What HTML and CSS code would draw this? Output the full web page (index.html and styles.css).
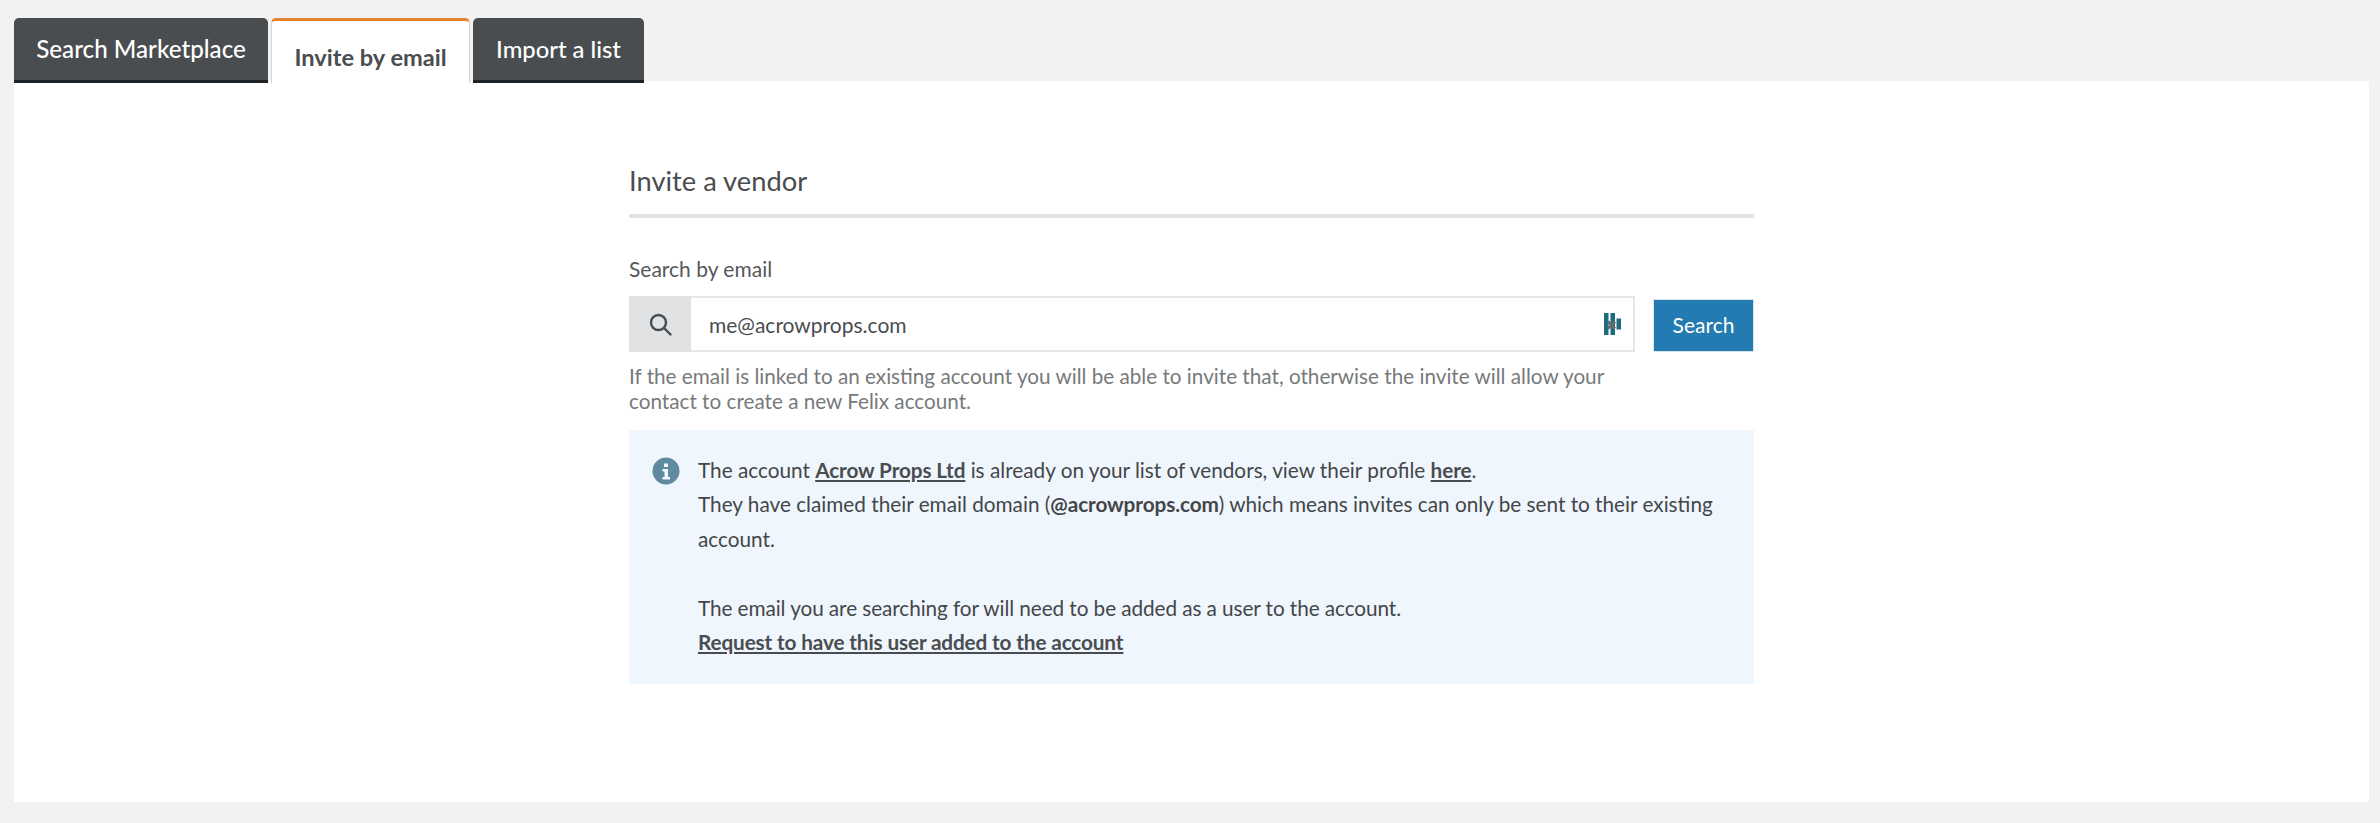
FILE: index.html
```html
<!DOCTYPE html>
<html lang="en">
<head>
<meta charset="utf-8">
<title>Invite a vendor</title>
<link rel="stylesheet" href="styles.css">
</head>
<body>
<nav class="tabs">
  <a class="tab tab-one">Search Marketplace</a>
  <a class="tab tab-active">Invite by email</a>
  <a class="tab tab-three">Import a list</a>
</nav>
<main class="panel">
  <section class="content">
    <h2 class="title">Invite a vendor</h2>
    <label class="label">Search by email</label>
    <div class="search-row">
      <div class="input-group">
        <span class="addon">
          <svg width="23" height="23" viewBox="0 0 23 23" fill="none" stroke="#4a4d4f" stroke-width="2.4"><circle cx="9.500" cy="9.500" r="7.500"/><path d="M15 15l6.500 6.500" stroke-linecap="round"/></svg>
        </span>
        <span class="input-value">me@acrowprops.com</span>
        <svg class="ext-icon" width="17" height="22" viewBox="0 0 17 22"><path fill="#1c6c7e" d="M0 0h4.500v22H0zM6.500 0H11v22H6.500zM12.500 5.500H17v11h-4.500z"/><path d="M4 15.500l7-7M4 8.500l7 7" stroke="#666b6e" stroke-width="3" fill="none"/></svg>
      </div>
      <button class="btn">Search</button>
    </div>
    <p class="help">If the email is linked to an existing account you will be able to invite that, otherwise the invite will allow your contact to create a new Felix account.</p>
    <div class="notice">
      <svg class="info" width="28" height="28" viewBox="0 0 28 28"><circle cx="14" cy="14" r="13.500" fill="#5f8aa0"/><path fill="#eff6fd" d="M12 6.500h4v3.500h-4zM10.500 12h5.500v8h2v2.500h-7.500V20h2v-5.500h-2z"/></svg>
      <div class="notice-text">
        The account <a class="link">Acrow Props Ltd</a> is already on your list of vendors, view their profile <a class="link">here</a>.<br>
        They have claimed their email domain (<b class="strong">@acrowprops.com</b>) which means invites can only be sent to their existing account.<br><br>
        <span class="tight-line">The email you are searching for will need to be added as a user to the account.</span><br>
        <a class="link link-tight">Request to have this user added to the account</a>
      </div>
    </div>
  </section>
</main>
</body>
</html>
```
FILE: styles.css
```css
* { box-sizing: border-box; }
html, body { height: 100%; }
body {
  margin: 0;
  padding: 18px 11px 21px 14px;
  background: #f2f2f2;
  font-family: Lato, "Liberation Sans", sans-serif;
  font-size: 21px;
  color: #444648;
  display: flex;
  flex-direction: column;
  overflow: hidden;
}
.tabs {
  display: flex;
  gap: 3px;
  height: 65px;
  align-items: stretch;
  margin-bottom: -2px;
  position: relative;
  z-index: 1;
}
.tab {
  padding: 15px 0 0;
  height: 65px;
  background: #4a4d4f;
  color: #fff;
  font-size: 24.2px;
  font-weight: 500;
  line-height: 32px;
  text-align: center;
  border-radius: 5px 5px 0 0;
  border-bottom: 3px solid #1c2226;
}
.tab-one { width: 254px; }
.tab-three { width: 171px; font-size: 23.8px; }
.tab-active {
  width: 199px;
  background: #fff;
  color: #4a4d4f;
  font-weight: 700;
  font-size: 23.6px;
  padding-top: 20px;
  border: 1px solid #d4d4d4;
  border-top: 3px solid #e6832e;
  border-bottom: 0;
}
.panel {
  flex: 1;
  background: #fff;
  padding: 83px 0 0;
}
.content {
  width: 1125px;
  margin: 0 auto;
}
.title {
  margin: 0;
  padding-bottom: 16px;
  font-size: 27.3px;
  font-weight: 400;
  line-height: 34px;
  color: #4a4d4f;
  border-bottom: 4px solid #e2e2e2;
}
.label {
  display: block;
  margin-top: 38px;
  line-height: 26px;
  color: #55585a;
}
.search-row {
  display: flex;
  align-items: flex-end;
  gap: 18px;
  margin-top: 14px;
}
.input-group {
  flex: 1;
  height: 56px;
  display: flex;
  align-items: center;
  border: 2px solid #e6e6e6;
  border-left: 0;
  position: relative;
  background: #fff;
}
.addon {
  width: 62px;
  align-self: stretch;
  margin: -2px 0;
  background: #e1e2e4;
  display: flex;
  align-items: center;
  justify-content: center;
}
.input-value {
  flex: 1;
  padding-left: 18px;
  color: #4a4d4f;
}
.ext-icon { margin-right: 12px; }
.btn {
  width: 101px;
  height: 53px;
  border: 1px solid #d8e4ee;
  background: #237bb1;
  color: #fff;
  font: inherit;
  padding: 0 0 2px;
}
.help {
  margin: 12px 0 0;
  width: 1006px;
  font-size: 20.7px;
  line-height: 25px;
  color: #77797b;
}
.notice {
  display: flex;
  gap: 18px;
  margin-top: 16px;
  padding: 23px 24px 25px 23px;
  background: #eff6fd;
}
.info { flex: none; margin-top: 4px; }
.notice-text { font-size: 20.75px; line-height: 34.4px; color: #444648; }
.tight-line { letter-spacing: -0.08px; }
.link { color: #4a4d4f; font-weight: 700; text-decoration: underline; letter-spacing: -0.12px; }
.link-tight { letter-spacing: -0.14px; }
.strong { font-weight: 700; letter-spacing: -0.1px; }
```
